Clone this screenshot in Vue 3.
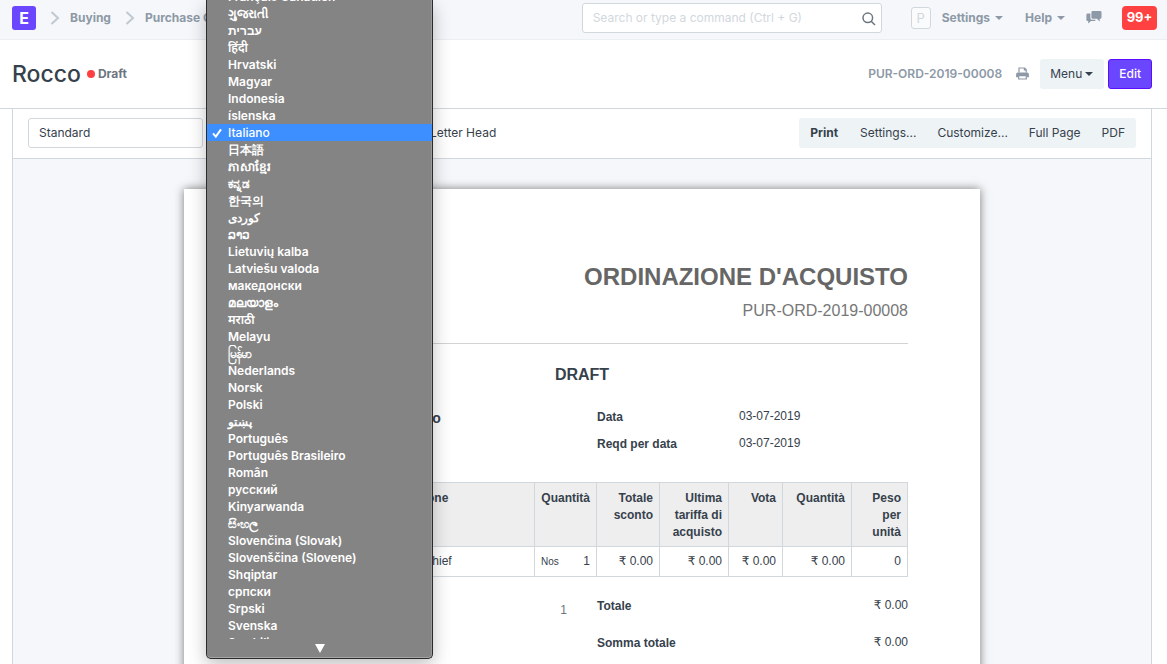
<script setup>
const languages = [
  'Français Canadien', 'ગુજરાતી', 'עברית', 'हिंदी', 'Hrvatski', 'Magyar', 'Indonesia', 'íslenska',
  'Italiano', '日本語', 'ភាសាខ្មែរ', 'ಕನ್ನಡ', '한국의', 'کوردی', 'ລາວ', 'Lietuvių kalba',
  'Latviešu valoda', 'македонски', 'മലയാളം', 'मराठी', 'Melayu', 'မြန်မာ', 'Nederlands', 'Norsk',
  'Polski', 'پښتو', 'Português', 'Português Brasileiro', 'Român', 'русский', 'Kinyarwanda', 'සිංහල',
  'Slovenčina (Slovak)', 'Slovenščina (Slovene)', 'Shqiptar', 'српски', 'Srpski', 'Svenska', 'Swahili',
]
const selected = 'Italiano'
const printActions = ['Print', 'Settings...', 'Customize...', 'Full Page', 'PDF']
</script>

<template>
  <div class="app">
    <header class="navbar">
      <a class="logo" href="#">E</a>
      <svg class="chevron" viewBox="0 0 10 16"><path d="M1.5 2 L8 8 L1.5 14" /></svg>
      <a class="nav-link" href="#">Buying</a>
      <svg class="chevron" viewBox="0 0 10 16"><path d="M1.5 2 L8 8 L1.5 14" /></svg>
      <a class="nav-link" href="#">Purchase Order</a>
      <div class="nav-right">
        <div class="search">
          <input type="text" aria-label="Search" placeholder="Search or type a command (Ctrl + G)" />
          <svg class="search-icon" viewBox="0 0 14 14"><circle cx="5.8" cy="5.8" r="4.8" /><path d="M9.2 9.2 L13 13" /></svg>
        </div>
        <span class="avatar">P</span>
        <button class="nav-button settings" type="button">Settings<i class="caret"></i></button>
        <button class="nav-button help" type="button">Help<i class="caret"></i></button>
        <button class="nav-button chat" type="button" aria-label="Chat">
          <svg viewBox="0 0 16 13">
            <path d="M6.5 0 H14.2 Q15.5 0 15.5 1.2 V6.6 Q15.5 7.8 14.2 7.8 H13.7 V10.6 L10.8 7.8 H6.5 Q5.4 7.8 5.4 6.6 V1.2 Q5.4 0 6.5 0 Z" />
            <path d="M4.4 2.6 V7.2 Q4.4 8.8 6 8.8 H9.6 V9 Q9.4 10 8.4 10 H5 L2.2 12.6 V10 H1.6 Q.4 10 .4 8.8 V3.8 Q.4 2.6 1.6 2.6 Z" />
          </svg>
        </button>
        <button class="badge" type="button">99+</button>
      </div>
    </header>

    <div class="page-head">
      <h1>Rocco</h1>
      <span class="dot"></span>
      <span class="status">Draft</span>
      <div class="head-right">
        <span class="doc-name">PUR-ORD-2019-00008</span>
        <button class="print-button" type="button" aria-label="Print">
          <svg viewBox="0 0 13 13">
            <path class="line" d="M3 5.5 V1 H8.6 L10.2 2.6 V5.5 M8.4 1 V3 H10.2" />
            <path class="solid" d="M1.8 5.4 H11.2 Q12.9 5.4 12.9 7.2 V10.2 H10.8 V8.4 H2.2 V10.2 H.1 V7.2 Q.1 5.4 1.8 5.4 Z" />
            <path class="line" d="M2.7 8.7 H10.3 V12 H2.7 Z" />
          </svg>
        </button>
        <button class="btn" type="button">Menu<i class="caret"></i></button>
        <button class="btn primary" type="button">Edit</button>
      </div>
    </div>

    <main class="preview">
      <div class="toolbar">
        <select class="format" aria-label="Print format"><option>Standard</option></select>
        <select class="language" aria-label="Language"><option>Italiano</option></select>
        <label class="letterhead"><input type="checkbox" checked />Letter Head</label>
        <div class="actions">
          <button v-for="a in printActions" :key="a" type="button">{{ a }}</button>
        </div>
      </div>

      <div class="canvas">
        <article class="sheet">
          <div class="sheet-head">
            <h2>ORDINAZIONE D'ACQUISTO</h2>
            <p>PUR-ORD-2019-00008</p>
          </div>
          <h4>DRAFT</h4>
          <div class="columns">
            <dl class="supplier">
              <div><dt></dt><dd>Rocco</dd></div>
            </dl>
            <dl>
              <div><dt>Data</dt><dd>03-07-2019</dd></div>
              <div><dt>Reqd per data</dt><dd>03-07-2019</dd></div>
            </dl>
          </div>
          <table>
            <colgroup>
              <col class="c-sr" /><col class="c-code" /><col /><col class="c-62" /><col class="c-63" />
              <col class="c-69" /><col class="c-54" /><col class="c-69" /><col class="c-56" />
            </colgroup>
            <thead>
              <tr>
                <th></th><th></th><th class="left">Descrizione</th><th>Quantità</th><th>Totale sconto</th>
                <th>Ultima tariffa di acquisto</th><th>Vota</th><th>Quantità</th><th>Peso per unità</th>
              </tr>
            </thead>
            <tbody>
              <tr>
                <td></td><td></td><td class="left">Handkerchief</td>
                <td><div class="qty"><small>Nos</small><span>1</span></div></td>
                <td>₹ 0.00</td><td>₹ 0.00</td><td>₹ 0.00</td><td>₹ 0.00</td><td>0</td>
              </tr>
            </tbody>
          </table>
          <div class="columns totals">
            <div class="total-qty">1</div>
            <dl>
              <div><dt>Totale</dt><dd>₹ 0.00</dd></div>
              <div><dt>Somma totale</dt><dd>₹ 0.00</dd></div>
            </dl>
          </div>
        </article>
      </div>
    </main>

    <div class="menu">
      <div class="menu-view">
        <ul role="listbox" aria-label="Language">
          <li v-for="l in languages" :key="l" role="option" :aria-selected="l === selected" :class="{ on: l === selected }">
            <svg v-if="l === selected" viewBox="0 0 10 10"><path d="M1 5.4 L3.8 8.6 L9 1.4" /></svg>
            <bdi>{{ l }}</bdi>
          </li>
        </ul>
      </div>
      <svg class="more" viewBox="0 0 10 9"><path d="M0 0 H10 L5 9 Z" /></svg>
    </div>
  </div>
</template>

<style>
body { margin: 0; background: #fff; }
</style>

<style scoped>
* { box-sizing: border-box; }
.app {
  position: relative;
  height: 100vh;
  overflow: hidden;
  display: flex;
  flex-direction: column;
  font: 12px/17px Inter, "Noto Sans", sans-serif;
  color: #36414c;
}
button, input, select { font: inherit; color: inherit; }
button { border: 0; background: none; padding: 0; white-space: nowrap; }
a { text-decoration: none; color: inherit; }
h1, h2, h4, p, dl, dd, ul { margin: 0; padding: 0; }

.navbar {
  display: flex;
  align-items: center;
  flex: none;
  height: 40px;
  padding: 0 10px 4px 12px;
  background: #f5f7fa;
  border-bottom: 1px solid #ebeff2;
  color: #8d99a6;
  font-weight: 700;
}
.logo {
  width: 24px;
  height: 24px;
  border-radius: 3px;
  background: #6b46ff;
  color: #fff;
  font-size: 16px;
  line-height: 24px;
  text-align: center;
}
.chevron { width: 10px; height: 16px; margin: 0 10px 0 14px; fill: none; stroke: #c0c9d2; stroke-width: 2; }
.nav-link { white-space: nowrap; }
.nav-right { display: flex; align-items: center; margin-left: auto; }
.search { position: relative; width: 300px; margin-right: 29px; }
.search input {
  display: block;
  width: 100%;
  height: 30px;
  padding: 0 34px 0 10px;
  border: 1px solid #d1d8dd;
  border-radius: 3px;
  background: #fff;
  font-weight: 400;
}
.search input::placeholder { color: #d1d8dd; opacity: 1; }
.search-icon { position: absolute; right: 6px; top: 9px; width: 14px; height: 14px; fill: none; stroke: #6c7680; stroke-width: 1.5; }
.avatar {
  width: 20px;
  height: 22px;
  border: 1px solid #d1d8dd;
  border-radius: 3px;
  background: #fafbfc;
  color: #d1d8dd;
  font-size: 13px;
  font-weight: 400;
  line-height: 20px;
  text-align: center;
}
.nav-button { display: flex; align-items: center; }
.settings { margin-left: 11px; }
.help { margin-left: 22px; }
.chat { margin: 0 20px 0 21px; }
.chat svg { width: 16px; height: 13px; fill: #8d99a6; }
.caret { width: 0; height: 0; margin-left: 5px; border: 4px solid transparent; border-top-color: currentColor; border-bottom: 0; }
.badge { width: 35px; height: 24px; border-radius: 4px; background: #ff4141; color: #fff; font-size: 13px; }

.page-head {
  display: flex;
  align-items: center;
  flex: none;
  height: 69px;
  padding: 0 15px 1px 12px;
  border-bottom: 1px solid #d1d8dd;
}
h1 { font-size: 23px; line-height: 30px; font-weight: 500; }
.dot { width: 8px; height: 8px; margin: 0 3px 0 6px; border-radius: 50%; background: #ff4141; }
.status { color: #6c7680; font-weight: 700; }
.head-right { display: flex; align-items: center; margin-left: auto; }
.doc-name { color: #8d99a6; font-weight: 600; }
.print-button { margin: 0 11px 0 14px; }
.print-button svg { display: block; width: 13px; height: 13px; }
.print-button .line { fill: none; stroke: #8d99a6; stroke-width: 1.2; }
.print-button .solid { fill: #8d99a6; }
.btn {
  display: flex;
  align-items: center;
  height: 30px;
  padding: 0 11px 0 10px;
  border-radius: 3px;
  background: #eef3f6;
}
.btn .caret { margin-left: 3px; }
.btn.primary { margin-left: 4px; padding: 0 10px; border: 1px solid #5a0dff; background: #6b46ff; color: #fff; font-weight: 500; }

.preview {
  display: flex;
  flex-direction: column;
  flex: 1;
  min-height: 0;
  margin: 0 15px 0 12px;
  border: solid #d1d8dd;
  border-width: 0 1px;
}
.toolbar {
  display: flex;
  align-items: center;
  flex: none;
  height: 50px;
  padding: 0 15px 1px;
  border-bottom: 1px solid #d1d8dd;
}
.toolbar select {
  appearance: none;
  width: 175px;
  height: 30px;
  padding: 0 10px 1px;
  border: 1px solid #d1d8dd;
  border-radius: 3px;
  background: #fff;
}
.toolbar .language { margin-left: 10px; }
.letterhead { display: flex; align-items: center; padding-bottom: 1px; white-space: nowrap; }
.letterhead input { width: 13px; height: 13px; margin: 0 4px 0 25px; }
.actions { display: flex; margin-left: auto; border-radius: 3px; background: #eef3f6; }
.actions button { height: 30px; padding: 0 11px 1px 10px; }
.actions button:first-child { padding: 0 12px 1px 11px; font-weight: 700; }

.canvas { flex: 1; min-height: 0; padding-top: 30px; background: #f5f7fa; overflow: hidden; }
.sheet {
  width: 796px;
  min-height: 1123px;
  margin: 0 auto;
  padding: 72px;
  background: #fff;
  box-shadow: 0 0 9px rgba(0, 0, 0, 0.5);
  font: 12px/17px "Liberation Sans", Arial, "DejaVu Sans", sans-serif;
}
.sheet-head { padding-bottom: 22px; border-bottom: 1px solid #d1d3d5; text-align: right; }
h2 { font-size: 24px; line-height: 32px; color: #666; }
.sheet-head p { margin-top: 8px; font-size: 16px; line-height: 20px; color: #777; }
h4 { margin-top: 21px; font-size: 16px; line-height: 20px; text-align: center; }
.columns { display: grid; grid-template-columns: 1fr 1fr; column-gap: 30px; margin-top: 24px; }
dl > div { display: grid; grid-template-columns: 142px 1fr; margin-bottom: 10px; }
dt { font-weight: 700; }
dl:not(.supplier) dd { line-height: 15px; }
.supplier dd { font-size: 14px; line-height: 18px; font-weight: 700; }
table { width: 100%; margin-top: 19px; border-collapse: collapse; table-layout: fixed; }
.c-sr { width: 32px; }
.c-code { width: 86px; }
.c-54 { width: 54px; }
.c-56 { width: 56px; }
.c-62 { width: 62px; }
.c-63 { width: 63px; }
.c-69 { width: 69px; }
th, td { padding: 6px; border: 1px solid #d1d8dd; text-align: right; vertical-align: top; }
th { padding: 7px 6px 5px; background: #eee; }
.left { text-align: left; }
.qty { display: flex; justify-content: space-between; }
.qty small { font-size: 10px; }
.totals { margin-top: 21px; }
.totals dl > div { margin-bottom: 20px; }
.totals dd { text-align: right; }
.total-qty { padding-top: 4px; color: #6c7680; text-align: right; }

.menu {
  position: absolute;
  top: 0;
  left: 206px;
  width: 227px;
  height: 659px;
  border: 1px solid #2b2b2b;
  border-top: 0;
  border-radius: 0 0 5px 5px;
  background: #848484;
  box-shadow: inset 0 -1px #a5a5a5, inset -1px 0 #999, 0 6px 18px rgba(0, 0, 0, 0.25);
  color: #fff;
  font-weight: 600;
}
.menu-view { height: 639px; overflow: hidden; }
ul { margin-top: -12px; list-style: none; }
li { position: relative; height: 17px; padding-left: 21px; line-height: 17px; white-space: nowrap; }
li.on { background: #3d8eff; font-weight: 500; }
li svg { position: absolute; left: 5px; top: 4px; width: 10px; height: 10px; fill: none; stroke: #fff; stroke-width: 2; }
.more { display: block; width: 10px; height: 9px; margin: 5px auto 0; fill: #fff; }
</style>
